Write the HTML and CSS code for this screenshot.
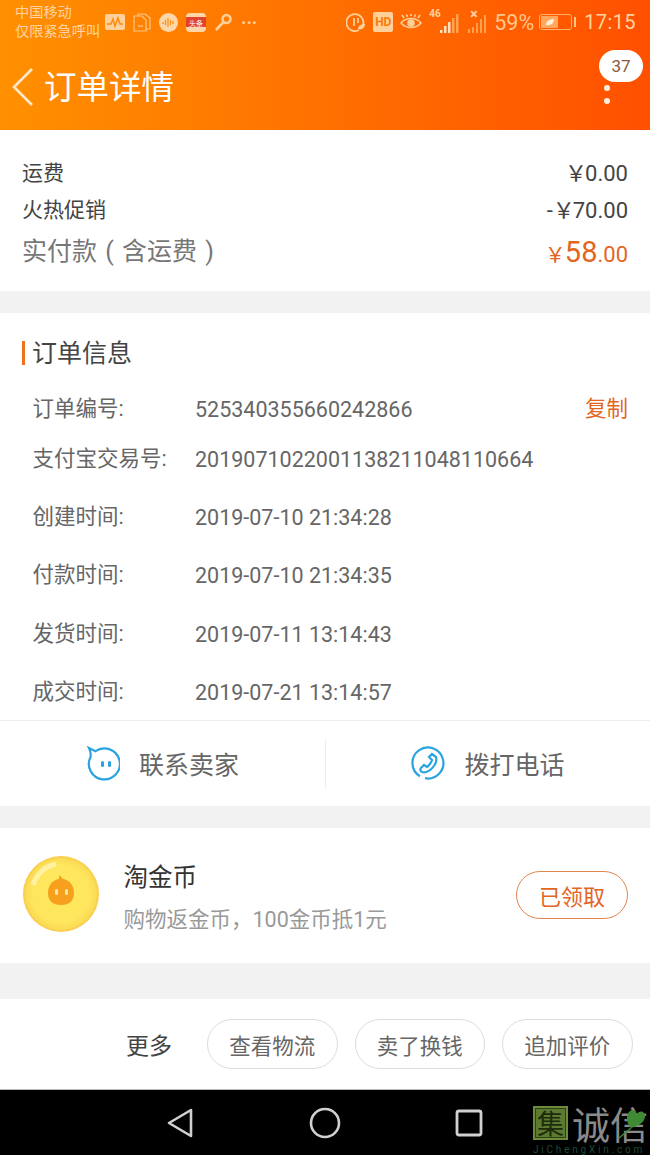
FILE: index.html
```html
<!DOCTYPE html>
<html lang="zh">
<head>
<meta charset="utf-8">
<title>订单详情</title>
<link rel="stylesheet" href="styles.css">
</head>
<body>
<div class="phone">
  <header class="head">
    <div class="status">
      <div class="carrier"><div>中国移动</div><div>仅限紧急呼叫</div></div>
      <div class="notif">
        <svg width="20" height="16" viewBox="0 0 20 16"><rect width="20" height="16" rx="2" fill="#ffd09a"/><path d="M2 10h4l2-5 2 7 3-8 2 6h3" fill="none" stroke="#f98a0c" stroke-width="1.500"/></svg>
        <svg width="18" height="19" viewBox="0 0 18 19" fill="none" stroke="#ffc78a" stroke-width="1.200"><path d="M5 3V1h7l5 4v11h-4"/><path d="M1 3h8l4 4v11H1z"/><path d="M5 13h5"/></svg>
        <svg width="19" height="19" viewBox="0 0 19 19"><circle cx="9.500" cy="9.500" r="9.500" fill="#ffd6a8"/><path d="M4 9v2M6.500 7v5M9 5v9M11.500 7v5M14 8v3" stroke="#f98a0c" stroke-width="1.200"/></svg>
        <svg width="20" height="19" viewBox="0 0 20 19"><rect width="20" height="19" rx="4" fill="#ffd6a8"/><rect y="4" width="20" height="10" fill="#e2432c"/><text x="10" y="12.500" class="mini" text-anchor="middle">头条</text></svg>
        <svg width="19" height="19" viewBox="0 0 19 19" fill="none" stroke="#ffd09a" stroke-width="2.600"><circle cx="12.500" cy="6" r="4"/><path d="M9.500 9L2 17"/></svg>
        <span class="dots">···</span>
      </div>
      <div class="sys">
        <svg width="20" height="20" viewBox="0 0 20 20" fill="none" stroke="#ffd09a" stroke-width="1.800"><path d="M17 13a8.500 8.500 0 1 0-4 5"/><path d="M8 6v8M12 6v5"/><path d="M12 17c0-3 3-5 7-5 0 4-3 6-7 5z" fill="#ffd09a" stroke="none"/></svg>
        <span class="hd">HD</span>
        <svg width="22" height="18" viewBox="0 0 22 18" fill="none" stroke="#ffd09a" stroke-width="1.600"><path d="M1 10c5-6 15-6 20 0-5 6-15 6-20 0z"/><circle cx="11" cy="10" r="3" fill="#ffd09a"/><path d="M4 5L2 2M11 3V1M18 5l2-3M7.500 4L6.500 1.500M14.500 4l1-2.500"/></svg>
        <div class="signal">
          <span class="net">46</span>
          <svg width="30" height="20" viewBox="0 0 30 20"><g fill="#ffe0bd"><rect x="11" y="17" width="2.500" height="3"/><rect x="15" y="13" width="2.500" height="7"/><rect x="19" y="9" width="2.500" height="11"/></g><g fill="#ffa24d"><rect x="23" y="5" width="2.500" height="15"/><rect x="27" y="1" width="2.500" height="19"/></g></svg>
        </div>
        <div class="signal narrow">
          <span class="net">×</span>
          <svg width="24" height="20" viewBox="0 0 24 20"><g fill="#ffa24d"><rect x="2" y="16" width="2" height="4"/><rect x="6" y="14" width="2" height="6"/><rect x="10" y="10" width="2" height="10"/><rect x="14" y="6" width="2" height="14"/><rect x="18" y="2" width="2" height="18"/></g></svg>
        </div>
        <span class="pct">59%</span>
        <div class="battery"><span class="fill"><svg width="10" height="8" viewBox="0 0 10 8"><path d="M1 7c0-4 4-6 8-6 0 4-3 7-8 6z" fill="#fff0de"/></svg></span></div><span class="nub"></span>
        <span class="clock">17:15</span>
      </div>
    </div>
    <div class="bar">
      <svg class="back" width="24" height="40" viewBox="0 0 24 40" fill="none" stroke="#ffe8cc" stroke-width="2.600"><path d="M21 2L3 20l18 18"/></svg>
      <h1 class="title">订单详情</h1>
      <div class="menu">
        <span class="badge">37</span>
        <span class="dot"></span><span class="dot"></span>
      </div>
    </div>
  </header>

  <section class="summary">
    <div class="sum-row"><span>运费</span><span class="num"><i class="yen">￥</i>0.00</span></div>
    <div class="sum-row"><span>火热促销</span><span class="num">-<i class="yen">￥</i>70.00</span></div>
    <div class="sum-total"><span class="total-label">实付款 ( 含运费 )</span><span class="price"><i class="yen-o">￥</i><b>58</b>.00</span></div>
  </section>

  <section class="info">
    <h2 class="info-title">订单信息</h2>
    <dl class="rows">
      <div class="row first"><dt>订单编号:</dt><dd>525340355660242866</dd><a class="copy">复制</a></div>
      <div class="row second"><dt>支付宝交易号:</dt><dd>2019071022001138211048110664</dd></div>
      <div class="row"><dt>创建时间:</dt><dd>2019-07-10 21:34:28</dd></div>
      <div class="row"><dt>付款时间:</dt><dd>2019-07-10 21:34:35</dd></div>
      <div class="row"><dt>发货时间:</dt><dd>2019-07-11 13:14:43</dd></div>
      <div class="row"><dt>成交时间:</dt><dd>2019-07-21 13:14:57</dd></div>
    </dl>
  </section>

  <section class="contact">
    <div class="contact-item">
      <svg width="34" height="35" viewBox="0 0 34 35" fill="none" stroke="#2aa3e0" stroke-width="2.200"><path d="M9.500 5.200A15.500 15.500 0 1 1 4.500 11C5 8 4.500 5 3 2z"/><rect x="15" y="15" width="3" height="6" rx="1.500" fill="#2aa3e0" stroke="none"/><rect x="22" y="15" width="3" height="6" rx="1.500" fill="#2aa3e0" stroke="none"/></svg>
      <span class="contact-label">联系卖家</span>
    </div>
    <div class="contact-item right">
      <svg width="34" height="35" viewBox="0 0 34 35" fill="none" stroke="#2aa3e0" stroke-width="2.200"><path d="M9 30.300A15.500 15.500 0 1 1 14 32.200"/><path d="M21 8l4 3c2 7-7 17-14 15-2-1-2-3-1-4l3-3 3 2c3-2 4-4 5-7l-3-3z"/></svg>
      <span class="contact-label">拨打电话</span>
    </div>
  </section>

  <section class="coin">
    <div class="coin-pic"><svg width="78" height="78" viewBox="0 0 78 78"><defs><radialGradient id="g" cx="50%" cy="50%" r="50%"><stop offset="0" stop-color="#ffe95a"/><stop offset="0.750" stop-color="#fee65e"/><stop offset="0.920" stop-color="#fbdc55"/><stop offset="1" stop-color="#f9c84a"/></radialGradient></defs><ellipse cx="39" cy="39" rx="38" ry="38" fill="url(#g)"/><path d="M11 30A30 30 0 0 1 34 9" fill="none" stroke="#fff6c0" stroke-width="5" opacity="0.700"/><path d="M37 20l4 4c7 1 11 7 11 14 0 9-6 12-13 12s-13-3-13-12c0-7 4-13 11-14z" fill="#f7a01e"/><rect x="33" y="34" width="3" height="6" rx="1.500" fill="#ffe3a0"/><rect x="43" y="34" width="3" height="6" rx="1.500" fill="#ffe3a0"/></svg></div>
    <div class="coin-text">
      <div class="coin-name">淘金币</div>
      <div class="coin-desc">购物返金币，100金币抵1元</div>
    </div>
    <button class="got">已领取</button>
  </section>

  <section class="foot">
    <span class="more">更多</span>
    <button class="pill">查看物流</button>
    <button class="pill">卖了换钱</button>
    <button class="pill">追加评价</button>
  </section>

  <nav class="nav">
    <svg class="nav-back" width="28" height="32" viewBox="0 0 28 32" fill="none" stroke="#d0d0d0" stroke-width="2.600" stroke-linejoin="round"><path d="M25 3v26L3 16z"/></svg>
    <svg class="nav-home" width="32" height="32" viewBox="0 0 32 32" fill="none" stroke="#d0d0d0" stroke-width="2.600"><circle cx="16" cy="16" r="14"/></svg>
    <svg width="28" height="28" viewBox="0 0 28 28" fill="none" stroke="#d0d0d0" stroke-width="2.800"><rect x="2" y="2" width="24" height="24" rx="2"/></svg>
  </nav>

  <div class="mark">
    <div class="mark-top"><span class="mark-box">集</span><span class="mark-name">诚信</span></div>
    <div class="mark-url">JiChengXin.com</div>
    <svg class="leaf" width="32" height="32" viewBox="0 0 32 32"><path d="M14 21C8 15 9 5 15 3c3 0 4 2 5 4 1-2 4-3 6-2 5 4 1 13-12 16z" fill="#3f8b35"/><path d="M14 21L2 31" stroke="#3f8b35" stroke-width="1.500"/></svg>
  </div>
</div>
</body>
</html>
```

FILE: styles.css
```css
* { box-sizing: border-box; }
html, body { margin: 0; padding: 0; background: #f2f2f2; }
body { font-family: "Roboto", "Noto Sans CJK SC", sans-serif; color: #444; }
.phone { position: relative; width: 650px; height: 1155px; overflow: hidden; display: flex; flex-direction: column; background: #f2f2f2; }

.head { height: 130px; background: linear-gradient(90deg, #ff9000 0%, #ff5000 100%); flex: none; }
.status { height: 44px; display: flex; align-items: flex-start; padding: 3px 14px 0 15px; }
.carrier { font-size: 14.200px; line-height: 19px; color: #ffd3a0; width: 87px; white-space: nowrap; }
.notif { display: flex; align-items: center; gap: 8px; height: 38px; margin-left: 3px; }
.mini { font-size: 7px; fill: #fff; font-family: "Noto Sans CJK SC", sans-serif; }
.dots { color: #ffd3a0; font-size: 18px; font-weight: 700; width: 22px; }
.sys { margin-left: auto; display: flex; align-items: center; height: 38px; }
.sys > svg { margin-right: 7px; }
.hd { width: 20px; height: 20px; background: #ffd09a; color: #f97a08; font: 700 12px/20px "Roboto", sans-serif; text-align: center; border-radius: 2px; margin-right: 7px; }
.signal { position: relative; margin-right: 5px; height: 22px; width: 32px; }
.signal.narrow { width: 24px; margin-right: 4px; }
.signal svg { position: absolute; left: 0; bottom: 0; }
.net { position: absolute; left: 0; top: -3px; font: 700 10px/12px "Roboto", sans-serif; color: #ffd3a0; z-index: 1; }
.signal.narrow .net { left: 4px; font-size: 14px; }
.pct { font-size: 21.500px; color: #ffc78a; margin-right: 5px; }
.battery { width: 33px; height: 16px; border: 1px solid #ffb266; border-radius: 3px; padding: 1px; display: flex; }
.fill { width: 59%; background: #ffa860; border-radius: 1px; display: flex; align-items: center; justify-content: center; }
.nub { width: 2px; height: 10px; background: #ffc78a; margin: 0 8px 0 2px; }
.clock { font-size: 20px; color: #ffd3a0; letter-spacing: 0.400px; }

.bar { height: 86px; display: flex; align-items: flex-start; padding: 23px 0 0 11px; position: relative; }
.title { margin: 0 0 0 9px; font-size: 32.500px; line-height: 42px; font-weight: 400; color: #fff; }
.menu { position: absolute; right: 7px; top: 6px; width: 44px; display: flex; flex-direction: column; align-items: center; }
.badge { width: 44px; height: 32px; border-radius: 16px; background: #fff; color: #8a5a3c; font-size: 17px; line-height: 32px; text-align: center; margin-bottom: 3px; }
.dot { width: 6px; height: 6px; border-radius: 50%; background: #ffeede; margin: 0 28px 7px 0; }

.summary { height: 161px; background: #fff; padding: 25px 22px 0; flex: none; }
.sum-row { display: flex; justify-content: space-between; font-size: 21px; line-height: 36px; height: 37px; color: #444; }
.sum-total { display: flex; justify-content: space-between; line-height: 40px; color: #777; margin-top: 3px; }
.total-label { font-size: 25px; word-spacing: 2px; }
.num { font-size: 22px; padding-top: 1px; }
.yen { font-style: normal; font-size: 22px; margin-right: -2px; }
.price { color: #e2661f; font-size: 22px; }
.yen-o { font-style: normal; font-size: 21px; margin-right: -1px; }
.price b { font-weight: 400; font-size: 29px; }

.info { height: 407px; margin-top: 22px; background: #fff; flex: none; padding: 0 22px; }
.info-title { margin: 28px 0 0; padding-left: 7px; height: 24px; border-left: 3px solid #f0701e; font-size: 25px; line-height: 26px; font-weight: 400; color: #444; }
.rows { margin: 0; padding: 0 0 0 10.500px; }
.row { display: flex; align-items: center; height: 58.400px; font-size: 21.500px; color: #666; }
.row.first { margin-top: 21px; height: 44px; }
.row.second { height: 57.400px; }
.row dt { width: 162.500px; flex: none; font-size: 21.500px; margin-bottom: 4px; }
.row dd { margin: 2px 0 0; flex: 1; white-space: nowrap; }
.copy { color: #e2661f; font-size: 21.500px; margin-bottom: 4px; }

.contact { height: 86px; background: #fff; flex: none; display: flex; align-items: center; border-top: 1px solid #eee; }
.contact-item { width: 325px; height: 50px; display: flex; align-items: center; justify-content: center; gap: 19px; font-size: 25px; color: #666; }
.contact-label { margin-bottom: 2px; }
.contact-item.right { border-left: 1px solid #eee; }

.coin { height: 135px; margin-top: 22px; background: #fff; flex: none; display: flex; align-items: center; padding: 0 22px; }
.coin-pic { width: 78px; height: 78px; margin: 0 23.500px 3px 0; flex: none; }
.coin-text { flex: 1; margin-top: 4px; }
.coin-name { font-size: 24.500px; line-height: 34px; color: #333; }
.coin-desc { font-size: 21.500px; line-height: 28px; color: #999; margin-top: 11px; white-space: nowrap; }
.got { width: 112px; height: 48px; margin-bottom: 2px; border: 1px solid #e2864e; border-radius: 24px; background: #fff; color: #e2661f; font: 400 22px "Roboto", "Noto Sans CJK SC", sans-serif; padding: 0; }

.foot { height: 91px; margin-top: 36px; background: #fff; flex: none; display: flex; align-items: center; justify-content: flex-end; padding: 0 17.500px 0 0; gap: 17px; border-bottom: 1px solid #bbb; }
.more { font-size: 23px; color: #444; margin-right: 18px; }
.pill { width: 130.500px; height: 50px; border: 1px solid #ddd; border-radius: 25px; background: #fff; color: #666; font: 400 21.500px "Roboto", "Noto Sans CJK SC", sans-serif; padding: 0; }

.nav { height: 65px; background: #000; flex: none; display: flex; align-items: center; padding-left: 166px; }
.nav-back { margin-right: 115px; }
.nav-home { margin-right: 114px; }

.mark { position: absolute; left: 533px; top: 1106px; width: 117px; height: 49px; }
.mark-top { display: flex; align-items: flex-start; gap: 4px; }
.mark-box { width: 35px; height: 34px; flex: none; background: #5c7a32; color: #1d2c0a; font: 400 27px/30px "Noto Sans CJK SC", sans-serif; text-align: center; border: 2px solid #6d8b3a; box-shadow: inset 0 0 0 1px #2f4216; }
.mark-name { font: 400 38px/34px "Noto Sans CJK SC", sans-serif; color: #8a8a8a; white-space: nowrap; }
.mark-url { font-size: 10px; line-height: 12px; letter-spacing: 2.800px; color: #1e4a3a; white-space: nowrap; margin-top: 4px; }
.leaf { position: absolute; left: 84px; top: 1px; }
```
